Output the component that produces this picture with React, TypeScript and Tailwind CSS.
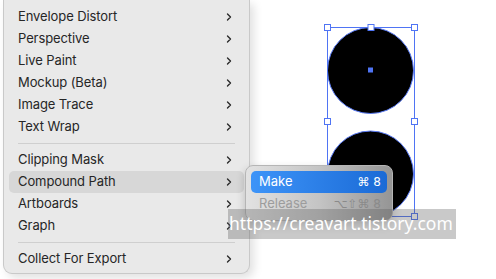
import React from "react"
import { ChevronRight } from "lucide-react"

type Row = { label: string; active?: boolean } | "sep"

const rows: Row[] = [
  { label: "Envelope Distort" },
  { label: "Perspective" },
  { label: "Live Paint" },
  { label: "Mockup (Beta)" },
  { label: "Image Trace" },
  { label: "Text Wrap" },
  "sep",
  { label: "Clipping Mask" },
  { label: "Compound Path", active: true },
  { label: "Artboards" },
  { label: "Graph" },
  "sep",
  { label: "Collect For Export" },
]

const Artwork: React.FC = () => (
  <svg className="absolute left-0 top-0" width="496" height="279" viewBox="0 0 496 279">
    <circle cx="370.5" cy="70.5" r="43" fill="#000" stroke="#5b7cf5" strokeWidth="1" />
    <circle cx="370.5" cy="174" r="43" fill="#000" stroke="#5b7cf5" strokeWidth="1" />
    <rect x="327.5" y="27.5" width="87" height="189" fill="none" stroke="#4f74f4" strokeWidth="1" />
    {[
      [327.5, 27.5],
      [371, 27.5],
      [414.5, 27.5],
      [327.5, 121.5],
      [414.5, 121.5],
      [327.5, 216.5],
      [414.5, 216.5],
    ].map(([x, y], i) => (
      <rect key={i} x={x - 3} y={y - 3} width="6" height="6" fill="#fff" stroke="#4f74f4" strokeWidth="1" />
    ))}
    <rect x="368" y="67.5" width="5" height="5" fill="#4f74f4" />
  </svg>
)

const App: React.FC = () => {
  return (
    <div className="relative h-[279px] w-[496px] overflow-hidden bg-white font-['Inter','Liberation_Sans',sans-serif]">
      <Artwork />

      {/* main menu */}
      <div className="relative ml-[3px] w-[247px] rounded-b-[9px] border border-t-0 border-[#c9c9c9] bg-[#e9e9e9] pb-[3px] pt-[6px] shadow-[4px_4px_10px_rgba(0,0,0,0.12)]">
        {rows.map((r, i) =>
          r === "sep" ? (
            <div key={i} className="flex h-[11px] items-center px-[14px]">
              <div className="h-px w-full bg-[#cfcfcf]" />
            </div>
          ) : (
            <div
              key={i}
              className={`mx-[5px] flex h-[22px] items-center justify-between rounded-[5px] pl-[9px] pr-[9px] text-[13px] tracking-[-0.1px] text-[#262626] ${
                r.active ? "bg-[#d7d7d7]" : ""
              }`}
            >
              <span>{r.label}</span>
              <ChevronRight className="h-[12px] w-[12px] text-[#2a2a2a]" strokeWidth={2.8} />
            </div>
          )
        )}
      </div>

      {/* submenu */}
      <div className="absolute left-[245px] top-[165px] h-[56px] w-[148px] rounded-[8px] border border-[#b5b5b5] bg-gradient-to-r from-[#e2e2e2] via-[#c4c4c4] to-[#959595] px-[5px] pt-[5px] shadow-[0_4px_10px_rgba(0,0,0,0.2)]">
        <div className="flex h-[22px] items-center justify-between rounded-[5px] bg-gradient-to-r from-[#3d94f8] to-[#1a6ad6] pl-[8px] pr-[6px] text-[13px] text-white">
          <span>Make</span>
          <span className="font-['DejaVu_Sans','Inter',sans-serif] text-[12px]">⌘ 8</span>
        </div>
        <div className="flex h-[22px] items-center justify-between pl-[8px] pr-[6px] text-[13px] text-[#9c9c9c]">
          <span>Release</span>
          <span className="font-['DejaVu_Sans','Inter',sans-serif] text-[12px] text-[#8a8a8a]">⌥⇧⌘ 8</span>
        </div>
      </div>

      {/* watermark */}
      <div className="absolute left-[228px] top-[209px] flex h-[30px] w-[228px] items-center bg-[rgba(90,90,90,0.33)] pl-[1px] font-['Noto_Sans',sans-serif] text-[17.5px] leading-none text-white">
        https://creavart.tistory.com
      </div>
    </div>
  )
}

export default App
